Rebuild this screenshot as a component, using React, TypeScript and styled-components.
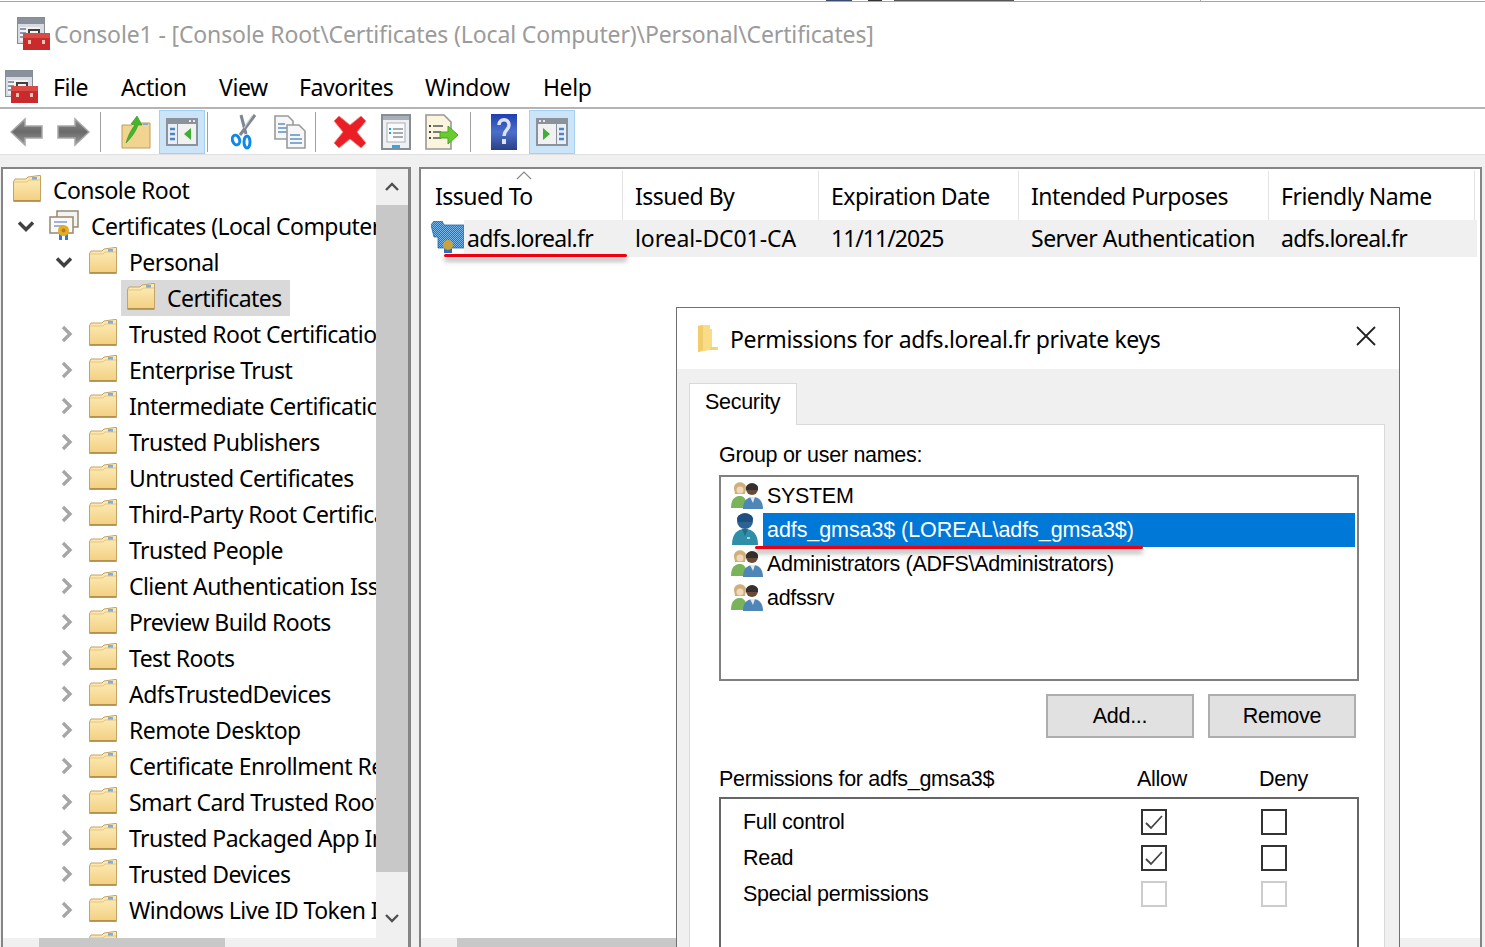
import React from "react";
import styled, { createGlobalStyle } from "styled-components";

const UI = `"Noto Sans", "Open Sans", sans-serif`;
const DLG = `"Liberation Sans", Arial, sans-serif`;

const Global = createGlobalStyle`
  html, body { margin: 0; padding: 0; background: #fff; }
  * { box-sizing: border-box; }
`;

const Page = styled.div`
  width: 1485px; height: 947px; overflow: hidden; background: #fff;
  display: flex; flex-direction: column; font-family: ${UI}; color: #000;
`;
const TopStrip = styled.svg`display: block; flex: none; width: 1485px; height: 3px;`;
const TitleBar = styled.div`
  flex: none; height: 63px; display: flex; align-items: center; padding: 0 0 2px 17px; gap: 4px;
  font-size: 23px; letter-spacing: -0.14px; color: #9b9b9b; white-space: nowrap;
`;
const MenuBar = styled.div`
  flex: none; height: 43px; display: flex; align-items: center; padding-left: 5px;
  border-bottom: 2px solid #b4b4b4; font-size: 23px; letter-spacing: -0.42px;
`;
const MenuItem = styled.span<{ $w: number }>`width: ${p => p.$w}px; flex: none; display: flex; align-items: center;`;
const ToolBar = styled.div`
  flex: none; height: 46px; display: flex; align-items: center; padding-left: 4px;
  border-bottom: 1px solid #e0e0e0;
`;
const ToolBtn = styled.div<{ $on?: boolean; $ml?: number }>`
  width: 46px; height: 44px; flex: none; display: flex; align-items: center; justify-content: center;
  margin-left: ${p => p.$ml ?? 0}px;
  background: ${p => (p.$on ? "#cce4f7" : "transparent")};
  border: 1px solid ${p => (p.$on ? "#a3d0f3" : "transparent")};
`;
const ToolSep = styled.div<{ $l: number; $r: number }>`
  width: 1px; height: 40px; flex: none; background: #a0a0a0;
  margin: 0 ${p => p.$r}px 0 ${p => p.$l}px;
`;
const Panes = styled.div`
  flex: 1; min-height: 0; background: #f0f0f0; padding: 12px 3px 0 1px; display: flex; gap: 8px;
`;
const LeftPane = styled.div`
  width: 410px; flex: none; display: flex; flex-direction: column;
  border: solid #858585; border-width: 2px 3px 0 2px; background: #fff;
`;
const LeftTop = styled.div`flex: 1; min-height: 0; display: flex;`;
const Tree = styled.div`flex: 1; min-width: 0; overflow: hidden; padding-top: 3px;`;
const TreeRow = styled.div`height: 36px; display: flex; align-items: stretch; white-space: nowrap; font-size: 23px; letter-spacing: -0.55px;`;
const Indent = styled.div<{ $w: number }>`
  width: ${p => p.$w}px; flex: none; display: flex; align-items: center; justify-content: flex-end;
  & > svg { margin-right: 10px; }
`;
const TreeItem = styled.div<{ $sel?: boolean }>`
  display: flex; align-items: center; padding: 0 8px 0 6px;
  background: ${p => (p.$sel ? "#d9d9d9" : "transparent")};
`;
const IconSlot = styled.div`width: 40px; flex: none; display: flex; align-items: center; padding-bottom: 3px;`;
const CertSlot = styled.div`margin-left: -2px; display: flex;`;
const VScroll = styled.div`width: 32px; flex: none; background: #f0f0f0; display: flex; flex-direction: column;`;
const ScrollEnd = styled.div<{ $h: number; $pt?: number }>`
  height: ${p => p.$h}px; flex: none; display: flex; align-items: center; justify-content: center;
  padding-top: ${p => p.$pt ?? 0}px;
`;
const VThumb = styled.div`height: 667px; flex: none; background: #c8c8c8;`;
const HScroll = styled.div<{ $pad: number; $w: number }>`
  height: 9px; flex: none; background: #f0f0f0; padding-left: ${p => p.$pad}px;
  &::before { content: ""; display: block; height: 100%; width: ${p => p.$w}px; background: #c8c8c8; }
`;
const RightPane = styled.div`
  flex: 1; min-width: 0; position: relative; display: flex; flex-direction: column;
  border: solid #858585; border-width: 2px 2px 0 2px; background: #fff;
`;
const List = styled.div`flex: 1; min-height: 0; padding-right: 3px;`;
const HeaderRow = styled.div`height: 51px; display: flex; position: relative; padding: 2px 0 0 2px; font-size: 23px; letter-spacing: -0.5px;`;
const HeaderCell = styled.div<{ $w: number }>`
  width: ${p => p.$w}px; flex: none; padding: 9px 0 0 12px; border-right: 1px solid #e3e3e3; white-space: nowrap;
`;
const SortArrow = styled.svg`position: absolute; left: 95px; top: 2px;`;
const DataRow = styled.div`height: 37px; display: flex; position: relative; padding-left: 10px; font-size: 23px;`;
const RowIcon = styled.div`padding-top: 1px; flex: none;`;
const Band = styled.div`flex: 1; background: #f0f0f0; display: flex; align-items: center; white-space: nowrap; padding-bottom: 2px;`;
const DataCell = styled.div<{ $w: number; $pad?: number; $ls: number }>`
  width: ${p => p.$w}px; flex: none; padding-left: ${p => p.$pad ?? 12}px; letter-spacing: ${p => p.$ls}px;
`;
const RedMark = styled.div<{ $l: number; $t: number; $w: number }>`
  position: absolute; left: ${p => p.$l}px; top: ${p => p.$t}px; width: ${p => p.$w}px; height: 3px;
  background: #ee0010; border-radius: 2px; box-shadow: 0 4px 5px rgba(0, 0, 0, 0.4);
`;
const Dialog = styled.div`
  position: absolute; left: 255px; top: 138px; width: 724px; height: 700px;
  background: #f0f0f0; border: 1px solid #707070; display: flex; flex-direction: column;
`;
const DlgTitle = styled.div`
  height: 61px; flex: none; background: #fff; display: flex; align-items: center;
  padding: 0 23px 0 21px; font-size: 23px; letter-spacing: -0.35px;
`;
const DlgTitleText = styled.span`flex: 1; margin-left: 12px;`;
const CloseIcon = styled.svg`margin-top: -5px; flex: none;`;
const DlgBody = styled.div`flex: 1; padding: 14px 14px 0 12px; display: flex; flex-direction: column; font-family: ${DLG}; font-size: 21.5px; letter-spacing: -0.3px;`;
const Tab = styled.div`
  width: 108px; height: 42px; flex: none; background: #fff; border: solid #d9d9d9; border-width: 1px 1px 0 1px;
  padding: 6px 0 0 15px; position: relative; z-index: 1; margin-bottom: -1px;
`;
const TabPage = styled.div`flex: 1; background: #fff; border: 1px solid #d9d9d9; padding: 18px 0 0 29px;`;
const Label = styled.div`height: 24px; line-height: 24px;`;
const UserBox = styled.div`
  width: 640px; height: 206px; margin-top: 8px; border: 2px solid #808080; padding: 2px 2px 0 10px;
`;
const UserRow = styled.div`height: 34px; display: flex; align-items: center;`;
const UserIcon = styled.div`width: 32px; flex: none; display: flex; align-items: center; padding-bottom: 3px;`;
const UserName = styled.div<{ $sel?: boolean }>`
  flex: 1; height: 34px; line-height: 34px; padding-left: 4px;
  background: ${p => (p.$sel ? "#0078d7" : "transparent")}; color: ${p => (p.$sel ? "#fff" : "#000")};
  letter-spacing: ${p => (p.$sel ? "-0.08px" : "-0.32px")};
`;
const BtnRow = styled.div`width: 637px; margin-top: 13px; display: flex; justify-content: flex-end; gap: 14px;`;
const Btn = styled.div`
  width: 148px; height: 44px; background: #e1e1e1; border: 2px solid #adadad; padding-top: 1px;
  display: flex; align-items: center; justify-content: center;
`;
const PermHead = styled.div`display: flex; margin-top: 29px; height: 24px; line-height: 24px;`;
const PermCol = styled.div<{ $w: number }>`width: ${p => p.$w}px; flex: none;`;
const PermLabel = styled.div`width: 398px; flex: none; padding-top: 1px;`;
const PermBox = styled.div`width: 640px; height: 200px; margin-top: 6px; border: 2px solid #666; padding: 5px 0 0 22px;`;
const PermRow = styled.div`height: 36px; display: flex; align-items: center;`;
const Check = styled.div<{ $off?: boolean; $gap: number }>`
  width: 26px; height: 26px; flex: none; margin-left: ${p => p.$gap}px;
  border: 2px solid ${p => (p.$off ? "#cccccc" : "#333")}; display: flex; align-items: center; justify-content: center; background: #fff;
`;

const Mmc = () => (
  <svg width="33" height="33" viewBox="0 0 33 33">
    <rect x="0.5" y="0.5" width="27" height="26" fill="#d8dce2" stroke="#858c96" />
    <rect x="1" y="1" width="26" height="6" fill="#8a919c" />
    <rect x="3" y="10" width="20" height="14" fill="#f2f2f2" />
    <path d="M3 12h6M3 16h6M3 20h6" stroke="#8d99ab" strokeWidth="2" />
    <path d="M12 17v-4h10v4" fill="none" stroke="#404040" strokeWidth="2" />
    <rect x="6" y="16" width="27" height="17" fill="#c92a2c" />
    <rect x="6" y="16" width="27" height="5" fill="#d94a44" />
    <rect x="11" y="23" width="3" height="4" fill="#f0c0b0" />
    <rect x="25" y="23" width="3" height="4" fill="#f0c0b0" />
  </svg>
);
const Folder = () => (
  <svg width="28" height="27" viewBox="0 0 28 27">
    <defs>
      <linearGradient id="fg" x1="0" y1="0" x2="0" y2="1">
        <stop offset="0" stopColor="#fdeebc" />
        <stop offset="1" stopColor="#f2cf80" />
      </linearGradient>
    </defs>
    <path d="M0.5 6.5 L2 4 H13 L15 2 L26 0.5 H27.5 V26.5 H0.5Z" fill="url(#fg)" stroke="#c4a364" />
    <path d="M1 25h26v1.5H1z" fill="#b3914f" />
    <rect x="19" y="2" width="5" height="3" fill="#78afe6" />
    <path d="M1 7H14L16 5H27" fill="none" stroke="#e5c57e" />
  </svg>
);
const CertPic = () => (
  <svg width="30" height="30" viewBox="0 0 30 30">
    <rect x="8" y="1" width="21" height="16" fill="#f3f3f0" stroke="#8f8269" strokeWidth="1.4" />
    <rect x="1" y="7" width="23" height="16" fill="#fafafa" stroke="#a08e76" strokeWidth="1.6" />
    <path d="M5 12h13M5 16h10" stroke="#9fb4dc" strokeWidth="2" />
    <rect x="10" y="24" width="3" height="6" fill="#2d7bd6" />
    <rect x="16" y="24" width="3" height="6" fill="#2d7bd6" />
    <circle cx="14.5" cy="20.5" r="5.5" fill="#e3ab28" />
    <circle cx="14.5" cy="20.5" r="2" fill="#b47d18" />
  </svg>
);
const CertDither = () => (
  <svg width="33" height="32" viewBox="0 0 33 32">
    <defs>
      <pattern id="dith" width="2" height="2" patternUnits="userSpaceOnUse">
        <rect width="2" height="2" fill="#0a78d6" />
        <rect width="1" height="1" fill="#7ab8ea" />
        <rect x="1" y="1" width="1" height="1" fill="#7ab8ea" />
      </pattern>
    </defs>
    <path d="M3 0h8l2 4h20v23H7v-11H3L0 4z" fill="url(#dith)" stroke="#2468a8" strokeWidth="0.8" />
    <rect x="13" y="27" width="8" height="5" fill="#2c6fc4" />
    <circle cx="17" cy="24" r="5" fill="#caa23c" />
  </svg>
);
const Chev = ({ open }: { open?: boolean }) =>
  open ? (
    <svg width="18" height="12" viewBox="0 0 18 12"><path d="M2 2.5l7 7 7-7" fill="none" stroke="#404040" strokeWidth="3.4" /></svg>
  ) : (
    <svg width="13" height="18" viewBox="0 0 13 18"><path d="M3 2l7 7-7 7" fill="none" stroke="#a6a6a6" strokeWidth="3.4" /></svg>
  );
const ScrollChev = ({ up }: { up?: boolean }) => (
  <svg width="14" height="10" viewBox="0 0 14 10">
    <path d={up ? "M1 8l6-6 6 6" : "M1 2l6 6 6-6"} fill="none" stroke="#505050" strokeWidth="2.4" />
  </svg>
);
const ArrowIcon = ({ right }: { right?: boolean }) => (
  <svg width="34" height="30" viewBox="0 0 34 30" style={right ? { transform: "scaleX(-1)" } : undefined}>
    <defs>
      <linearGradient id="ag" x1="0" y1="0" x2="0" y2="1">
        <stop offset="0" stopColor="#8a8a8a" />
        <stop offset="0.5" stopColor="#6a6a6a" />
        <stop offset="1" stopColor="#9a9a9a" />
      </linearGradient>
    </defs>
    <path d="M1 15 L15 2 V9 H32 V21 H15 V28Z" fill="url(#ag)" stroke="#a8a8a8" strokeWidth="1.5" />
  </svg>
);
const UpFolder = () => (
  <svg width="30" height="34" viewBox="0 0 30 34">
    <path d="M1 10h10l2-2h16v25H1z" fill="#f1d48f" stroke="#bd9c5c" />
    <rect x="22" y="8" width="5" height="2" fill="#78afe6" />
    <path d="M5 28 C8 18 11 14 14 10 L10 9 L16 1 L21 10 L17 10 C15 16 11 22 5 28Z" fill="#46b52e" stroke="#2f8f1f" strokeWidth="0.6" />
  </svg>
);
const PaneIcon = ({ flip }: { flip?: boolean }) => (
  <svg width="32" height="28" viewBox="0 0 32 28" style={flip ? { transform: "scaleX(-1)" } : undefined}>
    <rect x="0" y="0" width="32" height="28" fill="#8b929b" />
    <rect x="2" y="6" width="9" height="20" fill="#e8eef5" />
    <rect x="12" y="6" width="18" height="20" fill="#f1f1f1" />
    <path d="M4 11h5M4 16h5M4 21h5" stroke="#4f83c5" strokeWidth="2.5" />
    <path d="M25 10 L18 16 L25 22Z" fill="#3fae33" />
    <rect x="23" y="2" width="2" height="2" fill="#e8e8e8" />
    <rect x="27" y="2" width="2" height="2" fill="#e8e8e8" />
  </svg>
);
const Scissors = () => (
  <svg width="26" height="36" viewBox="0 0 26 36">
    <path d="M10 1 L15 20 M24 1 L9 21" stroke="#7e8691" strokeWidth="3" fill="none" />
    <path d="M21 2 L13 14" stroke="#c6ccd4" strokeWidth="1.2" fill="none" />
    <ellipse cx="5" cy="26" rx="3.5" ry="5" fill="none" stroke="#0f88e8" strokeWidth="3" transform="rotate(-20 5 26)" />
    <ellipse cx="16" cy="28" rx="3" ry="6" fill="none" stroke="#0f88e8" strokeWidth="3" />
  </svg>
);
const CopyIcon = () => (
  <svg width="32" height="34" viewBox="0 0 32 34">
    <path d="M1 1h13l5 5v18H1z" fill="#f7f7f7" stroke="#9a9a9a" strokeWidth="1.6" />
    <path d="M4 9h7M4 13h9M4 17h9" stroke="#5d8ec8" strokeWidth="1.6" />
    <path d="M13 10h12l6 6v17H13z" fill="#f7f7f7" stroke="#9a9a9a" strokeWidth="1.6" />
    <path d="M16 20h10M16 24h12M16 28h12" stroke="#5d8ec8" strokeWidth="1.6" />
  </svg>
);
const RedX = () => (
  <svg width="34" height="34" viewBox="0 0 34 34">
    <path d="M6 1 L17 10 L28 1 L33 6 L24 17 L33 28 L28 33 L17 24 L6 33 L1 28 L10 17 L1 6Z" fill="#ea1f26" stroke="#f08a8a" strokeWidth="1" />
  </svg>
);
const PropsIcon = () => (
  <svg width="30" height="36" viewBox="0 0 30 36">
    <rect x="1" y="1" width="28" height="34" fill="#eff0f1" stroke="#878d95" strokeWidth="2" />
    <rect x="2" y="2" width="26" height="4" fill="#a9afb7" />
    <rect x="6" y="9" width="18" height="19" fill="#fafafa" stroke="#a9afb7" />
    <path d="M12 15h10M12 19h10M12 23h10" stroke="#8b929b" strokeWidth="1.5" />
    <rect x="8" y="14" width="2" height="2" fill="#12a4e8" />
    <rect x="8" y="18" width="2" height="2" fill="#12a4e8" />
    <rect x="11" y="31" width="8" height="3" fill="#30a8e8" />
  </svg>
);
const ExportIcon = () => (
  <svg width="34" height="36" viewBox="0 0 34 36">
    <path d="M1 1h18l7 7v27H1z" fill="#fbf5dd" stroke="#989898" strokeWidth="1.6" />
    <path d="M8 12h10M8 18h8M8 24h8" stroke="#555" strokeWidth="1.6" />
    <rect x="4" y="11" width="2" height="2" fill="#444" />
    <rect x="4" y="17" width="2" height="2" fill="#444" />
    <rect x="4" y="23" width="2" height="2" fill="#444" />
    <path d="M15 18h8v-6l10 9-10 9v-6h-8z" fill="#68cc2e" stroke="#4aa420" />
  </svg>
);
const HelpIcon = () => (
  <svg width="26" height="36" viewBox="0 0 26 36">
    <defs>
      <linearGradient id="hg" x1="0" y1="0" x2="0" y2="1">
        <stop offset="0" stopColor="#1e3fae" />
        <stop offset="0.5" stopColor="#4b6fcb" />
        <stop offset="1" stopColor="#2b3f85" />
      </linearGradient>
    </defs>
    <rect width="26" height="36" fill="url(#hg)" />
    <path d="M8 11 C8 4 18 4 18 11 C18 16 13 16 13 22" fill="none" stroke="#dfe3f5" strokeWidth="3.5" />
    <rect x="11" y="25" width="4" height="5" fill="#dfe3f5" />
  </svg>
);
const DlgFolder = () => (
  <svg width="20" height="28" viewBox="0 0 20 28">
    <path d="M0 1 L5 0 H12 V4 H14 L14 22 H20 V25 H12 L1 27 L0 27Z" fill="#f9dc86" />
    <path d="M0 1 L5 0 V25 L0 27Z" fill="#f2cb6a" />
    <path d="M12 4 V22 H18 L20 25 H12Z" fill="#f5d27a" />
  </svg>
);
const GroupIcon = () => (
  <svg width="32" height="28" viewBox="0 0 32 28">
    <circle cx="9" cy="7" r="6" fill="#e2c79a" />
    <path d="M3 7 C3 0 15 0 15 7 L14 13 H4Z" fill="#cfb07c" />
    <circle cx="9" cy="9" r="3.5" fill="#f0d8b8" />
    <path d="M0 27 C0 16 6 15 9 15 C12 15 16 17 16 27Z" fill="#79b35a" />
    <circle cx="21" cy="8" r="6" fill="#6a4a34" />
    <path d="M15 7 C15 1 27 1 27 7 V9 H15Z" fill="#33302f" />
    <path d="M12 28 C12 18 18 16 22 16 C28 16 32 20 32 28Z" fill="#4f86b8" />
    <path d="M19 16h5l-2 6z" fill="#dfe8ef" />
  </svg>
);
const PersonIcon = () => (
  <svg width="28" height="33" viewBox="0 0 28 33">
    <circle cx="14" cy="9" r="8" fill="#2a6394" />
    <path d="M6 7 C6 0 22 0 22 7 L21 10 H7Z" fill="#1e4f7e" />
    <path d="M1 33 C1 21 7 17 14 17 C21 17 27 21 27 33Z" fill="#2f8fa8" />
    <path d="M11 17h6l-3 7z" fill="#1c6e8a" />
    <rect x="16" y="25" width="3" height="2" fill="#9adce8" />
  </svg>
);
const Tick = () => (
  <svg width="20" height="17" viewBox="0 0 20 17">
    <path d="M2 9l5 5L18 2" fill="none" stroke="#444" strokeWidth="1.8" />
  </svg>
);

const treeItems: { t: string; d: number; icon?: "cert"; open?: boolean; none?: boolean; sel?: boolean }[] = [
  { t: "Console Root", d: 0, none: true },
  { t: "Certificates (Local Computer)", d: 1, icon: "cert", open: true },
  { t: "Personal", d: 2, open: true },
  { t: "Certificates", d: 3, none: true, sel: true },
  { t: "Trusted Root Certification Authorities", d: 2 },
  { t: "Enterprise Trust", d: 2 },
  { t: "Intermediate Certification Authorities", d: 2 },
  { t: "Trusted Publishers", d: 2 },
  { t: "Untrusted Certificates", d: 2 },
  { t: "Third-Party Root Certification Authorities", d: 2 },
  { t: "Trusted People", d: 2 },
  { t: "Client Authentication Issuers", d: 2 },
  { t: "Preview Build Roots", d: 2 },
  { t: "Test Roots", d: 2 },
  { t: "AdfsTrustedDevices", d: 2 },
  { t: "Remote Desktop", d: 2 },
  { t: "Certificate Enrollment Requests", d: 2 },
  { t: "Smart Card Trusted Roots", d: 2 },
  { t: "Trusted Packaged App Installation Authorities", d: 2 },
  { t: "Trusted Devices", d: 2 },
  { t: "Windows Live ID Token Issuer", d: 2 },
  { t: "", d: 2, none: true },
];

const headers: [string, number][] = [
  ["Issued To", 200],
  ["Issued By", 196],
  ["Expiration Date", 200],
  ["Intended Purposes", 250],
  ["Friendly Name", 206],
];

export default function App() {
  return (
    <Page>
      <Global />
      <TopStrip viewBox="0 0 1485 3">
        <rect x="826" y="0" width="26" height="1" fill="#3a4a70" />
        <rect x="868" y="0" width="14" height="1" fill="#333" />
        <rect x="894" y="0" width="120" height="1" fill="#555" />
        <rect x="0" y="1" width="1485" height="1" fill="#a6a6a6" />
        <rect x="1200" y="0" width="1" height="1" fill="#a6a6a6" />
      </TopStrip>
      <TitleBar>
        <Mmc />
        <span>Console1 - [Console Root\Certificates (Local Computer)\Personal\Certificates]</span>
      </TitleBar>
      <MenuBar>
        <MenuItem $w={48}><Mmc /></MenuItem>
        <MenuItem $w={68}>File</MenuItem>
        <MenuItem $w={98}>Action</MenuItem>
        <MenuItem $w={80}>View</MenuItem>
        <MenuItem $w={126}>Favorites</MenuItem>
        <MenuItem $w={118}>Window</MenuItem>
        <MenuItem $w={60}>Help</MenuItem>
      </MenuBar>
      <ToolBar>
        <ToolBtn><ArrowIcon /></ToolBtn>
        <ToolBtn><ArrowIcon right /></ToolBtn>
        <ToolSep $l={4} $r={12} />
        <ToolBtn><UpFolder /></ToolBtn>
        <ToolBtn $on><PaneIcon /></ToolBtn>
        <ToolSep $l={2} $r={13} />
        <ToolBtn><Scissors /></ToolBtn>
        <ToolBtn><CopyIcon /></ToolBtn>
        <ToolSep $l={2} $r={11} />
        <ToolBtn><RedX /></ToolBtn>
        <ToolBtn><PropsIcon /></ToolBtn>
        <ToolBtn><ExportIcon /></ToolBtn>
        <ToolSep $l={5} $r={10} />
        <ToolBtn><HelpIcon /></ToolBtn>
        <ToolBtn $on $ml={2}><PaneIcon flip /></ToolBtn>
      </ToolBar>
      <Panes>
        <LeftPane>
          <LeftTop>
            <Tree>
              {treeItems.map((it, i) => (
                <TreeRow key={i}>
                  <Indent $w={4 + 38 * it.d}>{!it.none && <Chev open={it.open} />}</Indent>
                  <TreeItem $sel={it.sel}>
                    <IconSlot>{it.icon === "cert" ? <CertSlot><CertPic /></CertSlot> : <Folder />}</IconSlot>
                    <span>{it.t}</span>
                  </TreeItem>
                </TreeRow>
              ))}
            </Tree>
            <VScroll>
              <ScrollEnd $h={36}><ScrollChev up /></ScrollEnd>
              <VThumb />
              <ScrollEnd $h={66} $pt={26}><ScrollChev /></ScrollEnd>
            </VScroll>
          </LeftTop>
          <HScroll $pad={36} $w={186} />
        </LeftPane>
        <RightPane>
          <List>
            <HeaderRow>
              {headers.map(([t, w]) => <HeaderCell key={t} $w={w}>{t}</HeaderCell>)}
              <SortArrow width="16" height="9" viewBox="0 0 16 9"><path d="M1 8l7-7 7 7" fill="none" stroke="#8a8a8a" strokeWidth="1.2" /></SortArrow>
            </HeaderRow>
            <DataRow>
              <RowIcon><CertDither /></RowIcon>
              <Band>
                <DataCell $w={159} $pad={3} $ls={-0.75}>adfs.loreal.fr</DataCell>
                <DataCell $w={196} $ls={-0.1}>loreal-DC01-CA</DataCell>
                <DataCell $w={200} $ls={-1}>11/11/2025</DataCell>
                <DataCell $w={250} $ls={-0.5}>Server Authentication</DataCell>
                <DataCell $w={200} $ls={-0.75}>adfs.loreal.fr</DataCell>
              </Band>
              <RedMark $l={23} $t={34} $w={183} />
            </DataRow>
          </List>
          <HScroll $pad={36} $w={300} />
          <Dialog>
            <DlgTitle>
              <DlgFolder />
              <DlgTitleText>Permissions for adfs.loreal.fr private keys</DlgTitleText>
              <CloseIcon width="20" height="20" viewBox="0 0 20 20"><path d="M1 1l18 18M19 1L1 19" stroke="#222" strokeWidth="1.8" /></CloseIcon>
            </DlgTitle>
            <DlgBody>
              <Tab>Security</Tab>
              <TabPage>
                <Label>Group or user names:</Label>
                <UserBox>
                  <UserRow><UserIcon><GroupIcon /></UserIcon><UserName>SYSTEM</UserName></UserRow>
                  <UserRow><UserIcon><PersonIcon /></UserIcon><UserName $sel>adfs_gmsa3$ (LOREAL\adfs_gmsa3$)</UserName></UserRow>
                  <UserRow><UserIcon><GroupIcon /></UserIcon><UserName>Administrators (ADFS\Administrators)</UserName></UserRow>
                  <UserRow><UserIcon><GroupIcon /></UserIcon><UserName>adfssrv</UserName></UserRow>
                </UserBox>
                <BtnRow><Btn>Add...</Btn><Btn>Remove</Btn></BtnRow>
                <PermHead>
                  <PermCol $w={418}>Permissions for adfs_gmsa3$</PermCol>
                  <PermCol $w={122}>Allow</PermCol>
                  <PermCol $w={60}>Deny</PermCol>
                </PermHead>
                <PermBox>
                  <PermRow><PermLabel>Full control</PermLabel><Check $gap={0}><Tick /></Check><Check $gap={94} /></PermRow>
                  <PermRow><PermLabel>Read</PermLabel><Check $gap={0}><Tick /></Check><Check $gap={94} /></PermRow>
                  <PermRow><PermLabel>Special permissions</PermLabel><Check $gap={0} $off /><Check $gap={94} $off /></PermRow>
                </PermBox>
              </TabPage>
            </DlgBody>
            <RedMark $l={78} $t={238} $w={388} />
          </Dialog>
        </RightPane>
      </Panes>
    </Page>
  );
}
